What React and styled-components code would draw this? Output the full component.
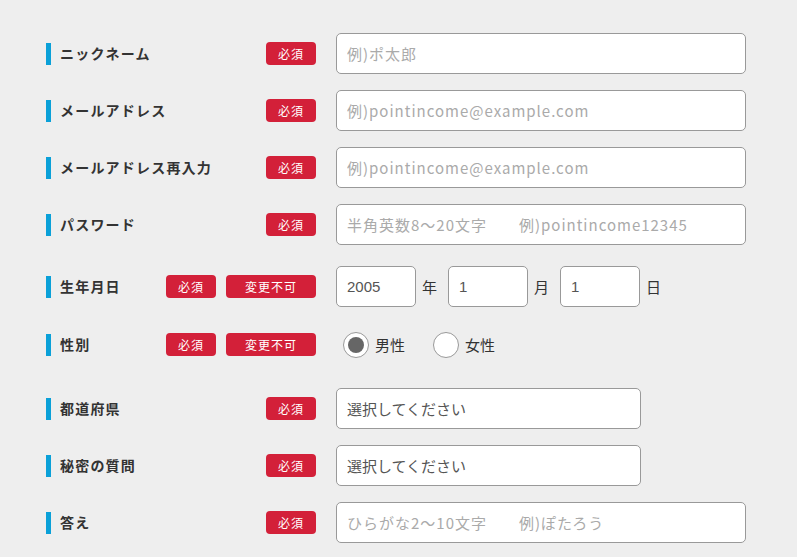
import React from 'react';
import styled, { createGlobalStyle } from 'styled-components';

const GlobalStyle = createGlobalStyle`
  html, body {
    margin: 0;
    padding: 0;
    background: #eeeeee;
  }
  body {
    font-family: "Noto Sans CJK JP", "Liberation Sans", sans-serif;
    color: #333;
  }
  * { box-sizing: border-box; }
`;

const fields = [
  { label: 'ニックネーム', placeholder: '例)ポ太郎', mt: 33 },
  { label: 'メールアドレス', placeholder: '例)pointincome@example.com', mt: 16 },
  { label: 'メールアドレス再入力', placeholder: '例)pointincome@example.com', mt: 16 },
  { label: 'パスワード', placeholder: '半角英数8～20文字　　例)pointincome12345', mt: 16 },
];

const App = () => {
  return (
    <>
      <GlobalStyle />
      <StyledForm>
        {fields.map((f) => (
          <Row key={f.label} $mt={f.mt}>
            <Label>{f.label}</Label>
            <Badges>
              <Badge>必須</Badge>
            </Badges>
            <TextInput placeholder={f.placeholder} />
          </Row>
        ))}

        <Row $mt={21}>
          <Label>生年月日</Label>
          <Badges>
            <Badge>必須</Badge>
            <Badge $wide>変更不可</Badge>
          </Badges>
          <DateGroup>
            <DateInput defaultValue="2005" />
            <Unit>年</Unit>
            <DateInput defaultValue="1" />
            <Unit>月</Unit>
            <DateInput defaultValue="1" />
            <Unit>日</Unit>
          </DateGroup>
        </Row>

        <Row $mt={17}>
          <Label>性別</Label>
          <Badges>
            <Badge>必須</Badge>
            <Badge $wide>変更不可</Badge>
          </Badges>
          <RadioGroup>
            <RadioLabel>
              <RadioCircle $checked />
              男性
            </RadioLabel>
            <RadioLabel>
              <RadioCircle />
              女性
            </RadioLabel>
          </RadioGroup>
        </Row>

        <Row $mt={23}>
          <Label>都道府県</Label>
          <Badges>
            <Badge>必須</Badge>
          </Badges>
          <SelectBox>選択してください</SelectBox>
        </Row>

        <Row $mt={16}>
          <Label>秘密の質問</Label>
          <Badges>
            <Badge>必須</Badge>
          </Badges>
          <SelectBox>選択してください</SelectBox>
        </Row>

        <Row $mt={16}>
          <Label>答え</Label>
          <Badges>
            <Badge>必須</Badge>
          </Badges>
          <TextInput placeholder="ひらがな2～10文字　　例)ぽたろう" />
        </Row>
      </StyledForm>
    </>
  );
};

const StyledForm = styled.div`
  width: 797px;
  height: 557px;
  padding-left: 46px;
  display: flex;
  flex-direction: column;
  overflow: hidden;
`;

const Row = styled.div`
  display: flex;
  align-items: center;
  height: 41px;
  flex-shrink: 0;
  margin-top: ${(p) => p.$mt}px;
`;

const Label = styled.div`
  width: 120px;
  height: 22px;
  display: flex;
  align-items: center;
  border-left: 5px solid #0aa0d8;
  padding-left: 9px;
  padding-bottom: 1px;
  font-size: 14px;
  font-weight: bold;
  letter-spacing: 1.2px;
  color: #333;
  white-space: nowrap;
`;

const Badges = styled.div`
  width: 150px;
  display: flex;
  justify-content: flex-end;
  gap: 10px;
  margin-right: 20px;
`;

const Badge = styled.span`
  width: ${(p) => (p.$wide ? 90 : 50)}px;
  height: 23px;
  display: flex;
  align-items: center;
  justify-content: center;
  background: #d32039;
  color: #fff;
  border-radius: 4px;
  font-size: 12px;
  letter-spacing: 1px;
`;

const TextInput = styled.input`
  width: 410px;
  height: 41px;
  border: 1px solid #999;
  border-radius: 5px;
  background: #fff;
  padding: 0 10px;
  font-family: "Noto Sans CJK JP", "Liberation Sans", sans-serif;
  font-size: 15px;
  letter-spacing: 1px;
  color: #555;
  outline: none;

  &::placeholder {
    color: #aaa;
  }
`;

const SelectBox = styled.div`
  width: 305px;
  height: 41px;
  border: 1px solid #999;
  border-radius: 5px;
  background: #fff;
  padding: 0 10px;
  display: flex;
  align-items: center;
  font-size: 15px;
  color: #555;
`;

const DateGroup = styled.div`
  display: flex;
  align-items: center;
`;

const DateInput = styled.input`
  width: 80px;
  height: 41px;
  border: 1px solid #999;
  border-radius: 5px;
  background: #fff;
  padding: 0 10px;
  font-family: "Liberation Sans", Arial, sans-serif;
  font-size: 15px;
  color: #555;
  outline: none;
`;

const Unit = styled.span`
  width: 32px;
  padding-left: 6px;
  font-size: 15px;
  color: #333;
`;

const RadioGroup = styled.div`
  display: flex;
  align-items: center;
  padding-left: 7px;
`;

const RadioLabel = styled.label`
  display: flex;
  align-items: center;
  width: 90px;
  font-size: 15px;
  color: #333;
  gap: 6px;
`;

const RadioCircle = styled.span`
  width: 26px;
  height: 26px;
  border-radius: 50%;
  border: 1px solid #999;
  background: #fff;
  display: flex;
  align-items: center;
  justify-content: center;

  &::after {
    content: '';
    display: ${(p) => (p.$checked ? 'block' : 'none')};
    width: 16px;
    height: 16px;
    border-radius: 50%;
    background: #666;
  }
`;

export default App;
